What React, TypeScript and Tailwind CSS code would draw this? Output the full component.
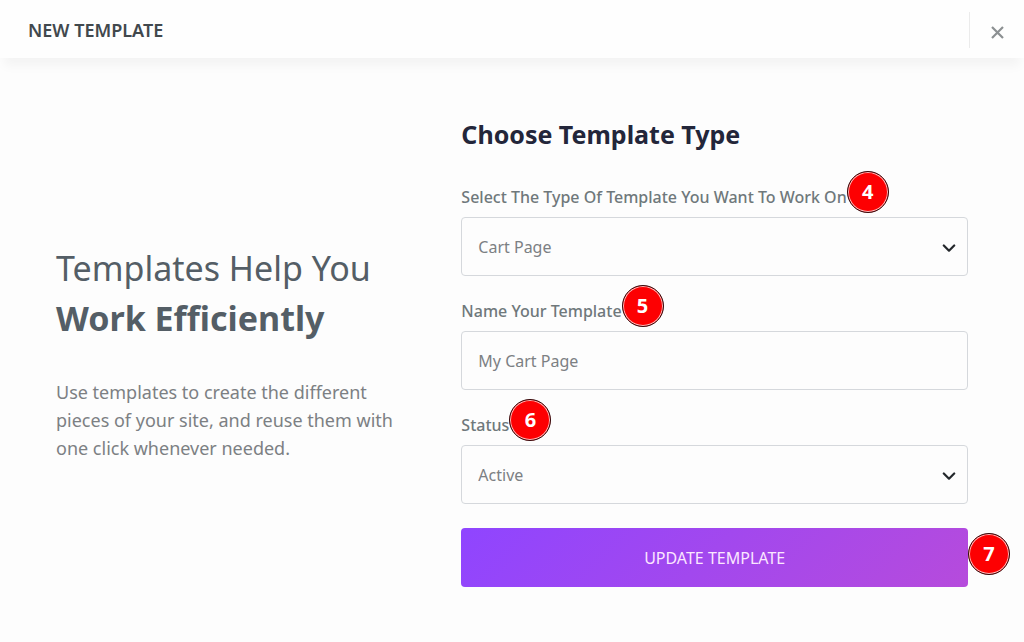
import React, { useState } from 'react';

const FIELD_CLASS =
  'block w-full h-[59px] px-4 rounded-sm border border-[#d5d8dc] bg-transparent text-base text-[#7c8083] outline-none focus:border-[#9346fb]';

const Badge: React.FC<{ className?: string; children: React.ReactNode }> = ({ className = '', children }) => (
  <span
    className={`absolute left-full flex items-center justify-center size-[42px] rounded-full border border-[#33090b] bg-[#fd0002] text-xl leading-none font-bold text-white shadow-[inset_0_0_0_1px_#ffb9b9] ${className}`}
  >
    {children}
  </span>
);

interface FieldProps {
  id: string;
  label: string;
  step: number;
  children: React.ReactNode;
}

const Field: React.FC<FieldProps> = ({ id, label, step, children }) => (
  <div>
    <div className="relative w-fit mb-[9px]">
      <label htmlFor={id} className="block text-base leading-[22px] font-medium text-[#6f787b]">
        {label}
      </label>
      <Badge className="-top-[15px]">{step}</Badge>
    </div>
    {children}
  </div>
);

interface SelectProps {
  id: string;
  options: string[];
}

const Select: React.FC<SelectProps> = ({ id, options }) => (
  <div className="relative">
    <select id={id} className={`${FIELD_CLASS} appearance-none`}>
      {options.map((option) => (
        <option key={option}>{option}</option>
      ))}
    </select>
    <svg
      className="absolute right-3 top-1/2 -translate-y-1/2 pointer-events-none text-[#23272b]"
      width="14"
      height="10"
      viewBox="0 0 14 10"
      fill="none"
      stroke="currentColor"
      strokeWidth="2.2"
      strokeLinecap="round"
      strokeLinejoin="round"
    >
      <path d="M1.8 3.5L7 8.7L12.2 3.5" />
    </svg>
  </div>
);

const App: React.FC = () => {
  const [name, setName] = useState('My Cart Page');

  return (
    <div className="min-h-screen bg-[#fdfdfd] font-['Noto_Sans',sans-serif]">
      <header className="flex items-center justify-between h-[58px] pt-0.5 pl-7 bg-[#fefefe] shadow-[0_12px_10px_-4px_rgba(0,0,0,0.04)]">
        <h1 className="text-lg font-semibold text-[#41484d]">NEW TEMPLATE</h1>
        <button
          type="button"
          aria-label="Close"
          className="flex items-center justify-center w-[55px] h-9 pt-1 border-l border-[#ebebeb] text-[#8c9092]"
        >
          <svg width="13" height="13" viewBox="0 0 13 13" fill="none" stroke="currentColor" strokeWidth="2.2">
            <path d="M1 1L12 12M12 1L1 12" />
          </svg>
        </button>
      </header>

      <main className="grid grid-cols-[4fr_5fr] items-center px-14 pt-[60px] pb-14">
        <section className="pr-14">
          <h2 className="text-[34px] leading-[50px] text-[#545e66]">
            Templates Help You
            <strong className="block font-bold">Work Efficiently</strong>
          </h2>
          <p className="mt-[35px] text-lg leading-7 text-[#7c8083]">
            Use templates to create the different pieces of your site, and reuse them with one click whenever needed.
          </p>
        </section>

        <form className="space-y-6" onSubmit={(e) => e.preventDefault()}>
          <h2 className="mb-9 text-[25px] leading-8 font-bold text-[#23263a]">Choose Template Type</h2>

          <Field id="type" label="Select The Type Of Template You Want To Work On" step={4}>
            <Select id="type" options={['Cart Page', 'Checkout Page', 'Product Page']} />
          </Field>

          <Field id="name" label="Name Your Template" step={5}>
            <input id="name" type="text" value={name} onChange={(e) => setName(e.target.value)} className={FIELD_CLASS} />
          </Field>

          <Field id="status" label="Status" step={6}>
            <Select id="status" options={['Active', 'Inactive']} />
          </Field>

          <div className="relative">
            <button
              type="submit"
              className="block w-full h-[59px] rounded-sm bg-linear-[135deg] from-[#8f45ff] to-[#b64bdc] text-base text-[#fbe6ff]"
            >
              UPDATE TEMPLATE
            </button>
            <Badge className="top-[5px]">7</Badge>
          </div>
        </form>
      </main>
    </div>
  );
};

export default App;
